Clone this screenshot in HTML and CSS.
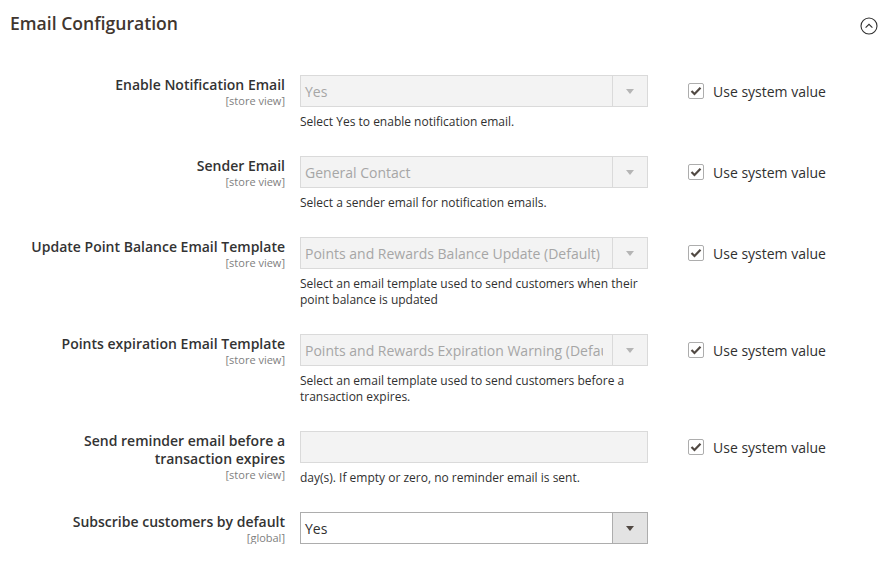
FILE: index.html
```html
<!DOCTYPE html>
<html>
<head>
<meta charset="utf-8">
<link rel="stylesheet" href="styles.css">
</head>
<body>
<section class="config">
  <header class="config-head">
    <h2 class="config-title">Email Configuration</h2>
    <span class="collapse-icon">
      <svg width="18" height="18" viewBox="0 0 18 18"><circle cx="9" cy="9" r="8" fill="none" stroke="#303030" stroke-width="1.1"/><path d="M5.6 10.6 L9 7.3 L12.4 10.6" fill="none" stroke="#303030" stroke-width="1.1"/></svg>
    </span>
  </header>

  <div class="fields">
    <div class="field">
      <div class="label"><span class="label-text">Enable Notification Email</span><span class="scope">[store view]</span></div>
      <div class="control">
        <div class="select disabled"><span class="select-value">Yes</span><span class="select-arrow"></span></div>
        <p class="note">Select Yes to enable notification email.</p>
      </div>
      <label class="use-default"><span class="checkbox"><svg width="12" height="10" viewBox="0 0 12 10"><path d="M1.5 5 L4.5 8 L10.5 1.8" fill="none" stroke="#514943" stroke-width="2.2"/></svg></span>Use system value</label>
    </div>

    <div class="field">
      <div class="label"><span class="label-text">Sender Email</span><span class="scope">[store view]</span></div>
      <div class="control">
        <div class="select disabled"><span class="select-value">General Contact</span><span class="select-arrow"></span></div>
        <p class="note">Select a sender email for notification emails.</p>
      </div>
      <label class="use-default"><span class="checkbox"><svg width="12" height="10" viewBox="0 0 12 10"><path d="M1.5 5 L4.5 8 L10.5 1.8" fill="none" stroke="#514943" stroke-width="2.2"/></svg></span>Use system value</label>
    </div>

    <div class="field">
      <div class="label"><span class="label-text">Update Point Balance Email Template</span><span class="scope">[store view]</span></div>
      <div class="control">
        <div class="select disabled"><span class="select-value">Points and Rewards Balance Update (Default)</span><span class="select-arrow"></span></div>
        <p class="note">Select an email template used to send customers when their point balance is updated</p>
      </div>
      <label class="use-default"><span class="checkbox"><svg width="12" height="10" viewBox="0 0 12 10"><path d="M1.5 5 L4.5 8 L10.5 1.8" fill="none" stroke="#514943" stroke-width="2.2"/></svg></span>Use system value</label>
    </div>

    <div class="field">
      <div class="label"><span class="label-text">Points expiration Email Template</span><span class="scope">[store view]</span></div>
      <div class="control">
        <div class="select disabled"><span class="select-value">Points and Rewards Expiration Warning (Default)</span><span class="select-arrow"></span></div>
        <p class="note">Select an email template used to send customers before a transaction expires.</p>
      </div>
      <label class="use-default"><span class="checkbox"><svg width="12" height="10" viewBox="0 0 12 10"><path d="M1.5 5 L4.5 8 L10.5 1.8" fill="none" stroke="#514943" stroke-width="2.2"/></svg></span>Use system value</label>
    </div>

    <div class="field">
      <div class="label"><span class="label-text">Send reminder email before a transaction expires</span><span class="scope">[store view]</span></div>
      <div class="control">
        <div class="input disabled"></div>
        <p class="note">day(s). If empty or zero, no reminder email is sent.</p>
      </div>
      <label class="use-default"><span class="checkbox"><svg width="12" height="10" viewBox="0 0 12 10"><path d="M1.5 5 L4.5 8 L10.5 1.8" fill="none" stroke="#514943" stroke-width="2.2"/></svg></span>Use system value</label>
    </div>

    <div class="field">
      <div class="label"><span class="label-text">Subscribe customers by default</span><span class="scope">[global]</span></div>
      <div class="control">
        <div class="select"><span class="select-value">Yes</span><span class="select-arrow"></span></div>
      </div>
      <div></div>
    </div>
  </div>
</section>
</body>
</html>
```
FILE: styles.css
```css
* { box-sizing: border-box; }
html, body { margin: 0; padding: 0; background: #fff; }
body {
  font-family: "Open Sans", "Noto Sans", sans-serif;
  color: #303030;
}
.config { width: 890px; }
.config-head {
  display: flex;
  align-items: center;
  justify-content: space-between;
  padding: 10px 12px 0 10px;
  height: 42px;
}
.config-title {
  margin: 0;
  font-size: 17.6px;
  font-weight: 600;
  color: #41362f;
  line-height: 24px;
  position: relative;
  top: -3px;
}
.collapse-icon { display: flex; }
.fields {
  padding-top: 33px;
  display: flex;
  flex-direction: column;
  gap: 26px;
}
.field {
  display: grid;
  grid-template-columns: 275px 348px auto;
  column-gap: 15px;
  padding-left: 10px;
}
.label {
  display: flex;
  flex-direction: column;
  align-items: flex-end;
  text-align: right;
  padding-top: 1px;
}
.label-text {
  font-size: 14px;
  font-weight: 600;
  line-height: 18px;
  color: #333;
}
.scope {
  font-size: 11px;
  line-height: 13px;
  color: #808080;
}
.control { display: flex; flex-direction: column; }
.select, .input {
  height: 32px;
  border: 1px solid #adadad;
  background: #fff;
  display: flex;
  align-items: stretch;
}
.select.disabled, .input.disabled {
  border-color: #dadada;
  background: #f3f3f3;
}
.select-value {
  flex: 1;
  overflow: hidden;
  white-space: nowrap;
  font-size: 14px;
  line-height: 30px;
  padding: 1px 0 0 4px;
  margin-right: 9px;
  color: #303030;
}
.select.disabled .select-value { color: #a6a6a6; }
.select-arrow {
  width: 35px;
  border-left: 1px solid #adadad;
  background: #e3e3e3;
  position: relative;
}
.select.disabled .select-arrow {
  border-left-color: #dadada;
  background: #f3f3f3;
}
.select-arrow::after {
  content: "";
  position: absolute;
  left: 13px;
  top: 13px;
  border-left: 4px solid transparent;
  border-right: 4px solid transparent;
  border-top: 5px solid #514943;
}
.select.disabled .select-arrow::after { border-top-color: #b5b5b5; }
.note {
  margin: 7px 0 0;
  font-size: 12px;
  line-height: 16px;
  color: #303030;
}
.use-default {
  display: flex;
  align-items: center;
  height: 32px;
  margin-left: 25px;
  font-size: 14px;
  color: #303030;
  align-self: start;
}
.checkbox {
  width: 16px;
  height: 16px;
  border: 1px solid #adadad;
  border-radius: 2px;
  background: #fff;
  display: flex;
  align-items: center;
  justify-content: center;
  margin-right: 9px;
}
```
